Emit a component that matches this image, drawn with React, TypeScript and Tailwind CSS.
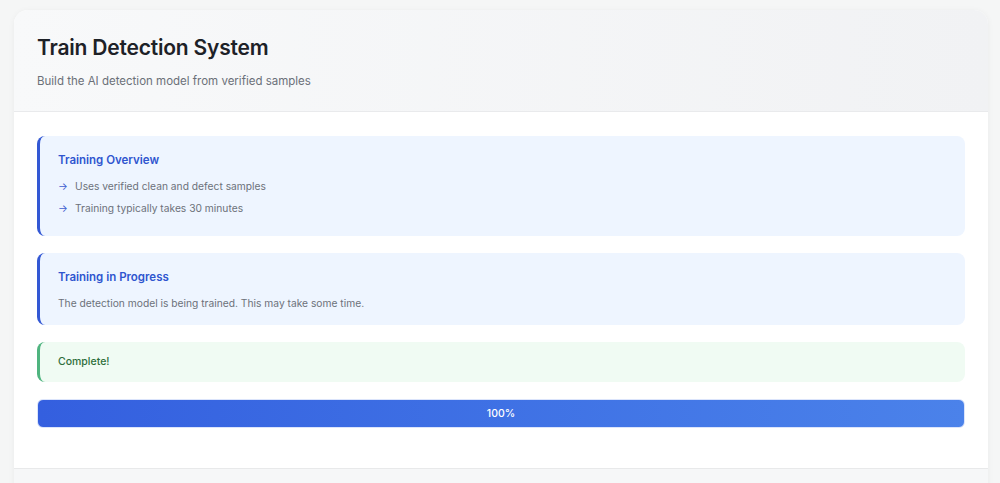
import React from "react";

export default function App() {
  return (
    <div
      className="min-h-screen w-full bg-[#f5f6f6] pl-[14px] pr-[12px] pt-[10px]"
      style={{ fontFamily: "Inter, 'Noto Sans', sans-serif" }}
    >
      <div className="rounded-t-[14px] bg-white shadow-[0_1px_6px_rgba(0,0,0,0.05)] overflow-hidden">
        <div className="bg-gradient-to-r from-[#f8f9fa] to-[#f1f2f4] border-b border-[#e9eaec] px-[23px] pt-[26px] pb-[22px]">
          <h1 className="text-[21px] leading-[24px] font-semibold text-[#1d2127] tracking-[-0.2px]">
            Train Detection System
          </h1>
          <p className="mt-[13px] text-[11.5px] leading-[16px] text-[#6b7078]">
            Build the AI detection model from verified samples
          </p>
        </div>
        <div className="px-[23px] pt-[24px] pb-[40px] flex flex-col gap-[17px]">
          <div className="rounded-[8px] border-l-[3px] border-[#3358d4] bg-[#eef5ff] pl-[18px] pt-[16px] pb-[20px]">
            <h2 className="text-[11.5px] leading-[16px] font-semibold text-[#2f55cf]">Training Overview</h2>
            <ul className="mt-[10px] flex flex-col gap-[6px] text-[10.25px] leading-[16px] text-[#6c717a]">
              <li className="flex items-center">
                <span className="w-[17px] text-[#3f5fd0]">→</span>Uses verified clean and defect samples
              </li>
              <li className="flex items-center">
                <span className="w-[17px] text-[#3f5fd0]">→</span>Training typically takes 30 minutes
              </li>
            </ul>
          </div>
          <div className="rounded-[8px] border-l-[3px] border-[#3358d4] bg-[#eef5ff] pl-[18px] pt-[16px] pb-[14px]">
            <h2 className="text-[11.5px] leading-[16px] font-semibold text-[#2f55cf]">Training in Progress</h2>
            <p className="mt-[10px] text-[10.25px] leading-[16px] text-[#6c717a]">
              The detection model is being trained. This may take some time.
            </p>
          </div>
          <div className="rounded-[8px] border-l-[3px] border-[#4fb47f] bg-[#f0fbf3] pl-[18px] py-[11px]">
            <p className="text-[10.5px] leading-[18px] font-medium text-[#2e6e3b]">Complete!</p>
          </div>
          <div className="h-[29px] rounded-[6px] bg-gradient-to-r from-[#345fdf] to-[#4b82ea] flex items-center justify-center border border-[#dbe4fb]">
            <span className="text-[10.5px] font-medium text-white">100%</span>
          </div>
        </div>
        <div className="h-[40px] border-t border-[#e8e9ea] bg-[#f6f7f8]" />
      </div>
    </div>
  );
}
